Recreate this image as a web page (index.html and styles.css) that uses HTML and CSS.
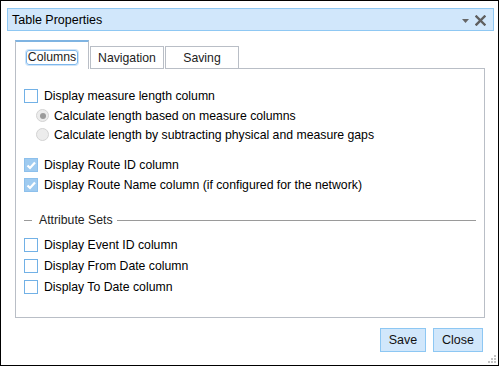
FILE: index.html
```html
<!DOCTYPE html>
<html lang="en">
<head>
    <meta charset="UTF-8">
    <title>Table Properties</title>
    <link rel="stylesheet" href="styles.css">
</head>
<body>
    <div class="window">
        <!-- Title bar -->
        <div class="titlebar">
            <span class="title">Table Properties</span>
            <span class="title-icons">
                <svg class="caret" width="7" height="4" viewBox="0 0 7 4"><polygon points="0,0 7,0 3.5,4" fill="#666"/></svg>
                <svg class="close-x" width="11" height="11" viewBox="0 0 11 11"><path d="M1.5 1.5 L9.5 9.5 M9.5 1.5 L1.5 9.5" stroke="#5f5f5f" stroke-width="2.4" stroke-linecap="square"/></svg>
            </span>
        </div>

        <!-- Tabs -->
        <div class="panel">
            <div class="tabbar">
                <div class="tab active"><span class="focus">Columns</span></div>
                <div class="tab">Navigation</div>
                <div class="tab">Saving</div>
                <div class="tabfill"></div>
            </div>
            <div class="panel-body">
                <div class="row">
                    <span class="check"></span>
                    <span>Display measure length column</span>
                </div>
                <div class="row sub">
                    <span class="radio on"></span>
                    <span>Calculate length based on measure columns</span>
                </div>
                <div class="row sub">
                    <span class="radio"></span>
                    <span>Calculate length by subtracting physical and measure gaps</span>
                </div>
                <div class="row first-route">
                    <span class="check checked"><svg width="12" height="12" viewBox="0 0 12 12"><polyline points="2.5,6.5 5,9 10,3.5" fill="none" stroke="#fff" stroke-width="2.2"/></svg></span>
                    <span>Display Route ID column</span>
                </div>
                <div class="row">
                    <span class="check checked"><svg width="12" height="12" viewBox="0 0 12 12"><polyline points="2.5,6.5 5,9 10,3.5" fill="none" stroke="#fff" stroke-width="2.2"/></svg></span>
                    <span>Display Route Name column (if configured for the network)</span>
                </div>

                <div class="group-head">
                    <span class="line short"></span>
                    <span class="group-label">Attribute Sets</span>
                    <span class="line"></span>
                </div>
                <div class="row attr">
                    <span class="check"></span>
                    <span>Display Event ID column</span>
                </div>
                <div class="row attr">
                    <span class="check"></span>
                    <span>Display From Date column</span>
                </div>
                <div class="row attr">
                    <span class="check"></span>
                    <span>Display To Date column</span>
                </div>
            </div>
        </div>

        <!-- Buttons -->
        <div class="footer">
            <button class="btn save">Save</button>
            <button class="btn close">Close</button>
        </div>

        <svg class="grip" width="8" height="8" viewBox="0 0 8 8">
            <rect x="6" y="0" width="2" height="2" fill="#c4c4c4"/>
            <rect x="3" y="3" width="2" height="2" fill="#c4c4c4"/>
            <rect x="6" y="3" width="2" height="2" fill="#c4c4c4"/>
            <rect x="0" y="6" width="2" height="2" fill="#c4c4c4"/>
            <rect x="3" y="6" width="2" height="2" fill="#c4c4c4"/>
            <rect x="6" y="6" width="2" height="2" fill="#c4c4c4"/>
        </svg>
    </div>
</body>
</html>
```

FILE: styles.css
```css
body {
    margin: 0;
    background: #fff;
}
.window {
    position: relative;
    box-sizing: border-box;
    width: 499px;
    height: 366px;
    border: 1px solid #000;
    background: #fff;
    font-family: "Liberation Sans", Arial, sans-serif;
    font-size: 12.25px;
    color: #000;
}
.titlebar {
    box-sizing: border-box;
    display: flex;
    align-items: center;
    justify-content: space-between;
    height: 23px;
    margin: 7px 4px 0 6px;
    padding: 1px 7px 0 4px;
    border: 1px solid #8fc8f3;
    background: #d1e7fb;
    font-size: 12.5px;
}
.title-icons {
    display: flex;
    align-items: center;
    gap: 6px;
}
.caret {
    margin-top: 1px;
}

.panel {
    margin: 9px 13px 0 14px;
}
.tabbar {
    display: flex;
    align-items: flex-end;
    height: 29px;
}
.tab {
    box-sizing: border-box;
    width: 74px;
    height: 23px;
    margin-left: 1px;
    border: 1px solid #b9bec6;
    display: flex;
    align-items: center;
    justify-content: center;
    color: #222;
}
.tab.active {
    height: 29px;
    margin-left: 0;
    border-top: 2px solid #7fb4e2;
    border-bottom: none;
    padding-top: 3px;
}
.focus {
    border: 1px solid #7db7ec;
    border-radius: 3px;
    box-shadow: 0 0 0 1px #cfe4f8;
    padding: 0 1px;
    line-height: 13px;
}
.tabfill {
    flex: 1;
    border-bottom: 1px solid #b9bec6;
}
.panel-body {
    box-sizing: border-box;
    height: 249px;
    padding: 17px 8px 0 8px;
    border: 1px solid #b9bec6;
    border-top: none;
}

.row {
    display: flex;
    align-items: center;
    height: 20px;
}
.row.sub {
    height: 19px;
    padding-left: 12px;
}
.row.first-route {
    margin-top: 11px;
}
.row.attr {
    height: 21px;
}
.check {
    box-sizing: border-box;
    width: 14px;
    height: 14px;
    margin-right: 6px;
    border: 1px solid #72b1e6;
    background: #fff;
    display: flex;
    align-items: center;
    justify-content: center;
}
.check.checked {
    background: #9fcbf0;
    border-color: #8dc0ec;
}
.radio {
    box-sizing: border-box;
    width: 13px;
    height: 13px;
    margin-right: 5px;
    border-radius: 50%;
    border: 1px solid #d3d3d3;
    background: #ececec;
    display: flex;
    align-items: center;
    justify-content: center;
}
.radio.on::after {
    content: "";
    width: 6px;
    height: 6px;
    border-radius: 50%;
    background: #9b9b9b;
}

.group-head {
    display: flex;
    align-items: center;
    height: 20px;
    margin: 15px 0 4px;
}
.line {
    flex: 1;
    height: 1px;
    background: #9a9a9a;
}
.line.short {
    flex: none;
    width: 8px;
}
.group-label {
    padding: 0 4px 0 7px;
    color: #222;
}

.footer {
    display: flex;
    justify-content: flex-end;
    gap: 7px;
    margin: 10px 15px 0 0;
}
.btn {
    height: 24px;
    padding: 0;
    border: 1px solid #8dc7f3;
    background: #d1e7fb;
    font-family: "Liberation Sans", Arial, sans-serif;
    font-size: 12.5px;
    color: #111;
}
.btn.save {
    width: 46px;
}
.btn.close {
    width: 50px;
}
.grip {
    position: absolute;
    right: 2px;
    bottom: 2px;
}
```
